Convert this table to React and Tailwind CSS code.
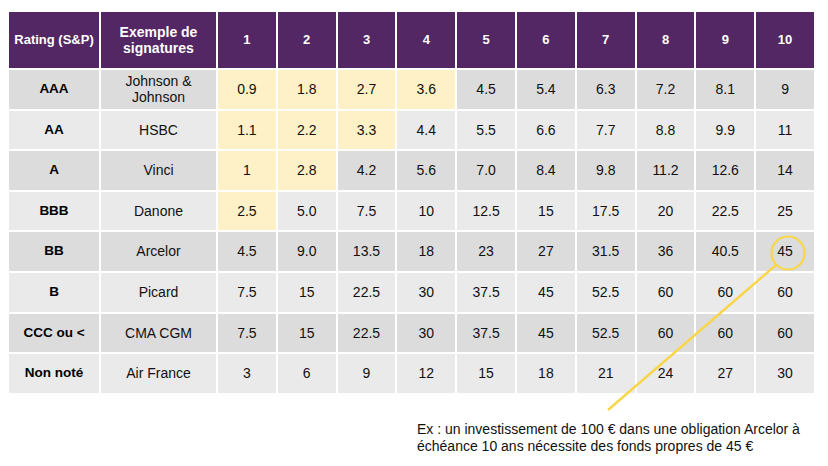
import React from "react";

const cols = ["1", "2", "3", "4", "5", "6", "7", "8", "9", "10"];

const rows = [
  { r: "AAA", s: ["Johnson &", "Johnson"], v: ["0.9", "1.8", "2.7", "3.6", "4.5", "5.4", "6.3", "7.2", "8.1", "9"], y: 4, dark: true },
  { r: "AA", s: ["HSBC"], v: ["1.1", "2.2", "3.3", "4.4", "5.5", "6.6", "7.7", "8.8", "9.9", "11"], y: 3, dark: false },
  { r: "A", s: ["Vinci"], v: ["1", "2.8", "4.2", "5.6", "7.0", "8.4", "9.8", "11.2", "12.6", "14"], y: 2, dark: true },
  { r: "BBB", s: ["Danone"], v: ["2.5", "5.0", "7.5", "10", "12.5", "15", "17.5", "20", "22.5", "25"], y: 1, dark: false },
  { r: "BB", s: ["Arcelor"], v: ["4.5", "9.0", "13.5", "18", "23", "27", "31.5", "36", "40.5", "45"], y: 0, dark: true },
  { r: "B", s: ["Picard"], v: ["7.5", "15", "22.5", "30", "37.5", "45", "52.5", "60", "60", "60"], y: 0, dark: false },
  { r: "CCC ou <", s: ["CMA CGM"], v: ["7.5", "15", "22.5", "30", "37.5", "45", "52.5", "60", "60", "60"], y: 0, dark: true },
  { r: "Non noté", s: ["Air France"], v: ["3", "6", "9", "12", "15", "18", "21", "24", "27", "30"], y: 0, dark: false },
];

export default function App() {
  return (
    <div
      className="relative w-[828px] h-[466px] bg-white pt-[12px] pl-[9px] text-[14px] leading-[16.5px] text-[#111]"
      style={{ fontFamily: '"Liberation Sans", Arial, sans-serif' }}
    >
      <div className="grid w-[805px] grid-cols-[90px_115px_repeat(10,1fr)] grid-rows-[56px_repeat(8,38.6px)] gap-[2px]">
        <div className="flex items-center justify-center bg-[#522763] text-center text-[13px] font-bold text-white">Rating (S&amp;P)</div>
        <div className="flex items-center justify-center bg-[#522763] text-center text-[14px] font-bold text-white">
          Exemple de
          <br />
          signatures
        </div>
        {cols.map((c) => (
          <div key={c} className="flex items-center justify-center bg-[#522763] text-[13px] font-bold text-white">
            {c}
          </div>
        ))}
        {rows.map((row) => {
          const bg = row.dark ? "bg-[#dcdcdc]" : "bg-[#eaeaea]";
          return (
            <React.Fragment key={row.r}>
              <div className={`flex items-center justify-center text-[13.5px] font-bold text-black ${bg}`}>{row.r}</div>
              <div className={`flex flex-col items-center justify-center text-center ${bg}`}>
                {row.s.map((t) => (
                  <span key={t}>{t}</span>
                ))}
              </div>
              {row.v.map((v, i) => (
                <div
                  key={i}
                  className={`flex items-center justify-center ${i < row.y ? "bg-[#fef0c7]" : bg}`}
                >
                  {v}
                </div>
              ))}
            </React.Fragment>
          );
        })}
      </div>
      <div className="mt-[28px] ml-[408px] leading-[17px] text-[#111]">
        Ex : un investissement de 100 € dans une obligation Arcelor à
        <br />
        échéance 10 ans nécessite des fonds propres de 45 €
      </div>
      <svg className="pointer-events-none absolute left-0 top-0" width="828" height="466" viewBox="0 0 828 466">
        <circle cx="788" cy="253" r="16.5" fill="none" stroke="#f8d648" strokeWidth="2.2" />
        <line x1="608" y1="410" x2="776" y2="265" stroke="#f8d648" strokeWidth="2.4" />
      </svg>
    </div>
  );
}
